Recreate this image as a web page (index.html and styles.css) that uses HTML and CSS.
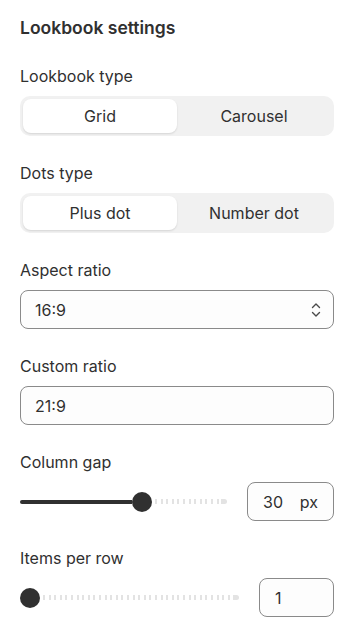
FILE: index.html
```html
<!DOCTYPE html>
<html lang="en">
<head>
  <meta charset="UTF-8">
  <title>Lookbook settings</title>
  <link rel="stylesheet" href="styles.css">
</head>
<body>

  <div class="settings">
    <h2 class="title">Lookbook settings</h2>

    <!-- lookbook type -->
    <div class="field">
      <label>Lookbook type</label>
      <div class="segmented">
        <button class="seg active">Grid</button>
        <button class="seg">Carousel</button>
      </div>
    </div>

    <!-- dots type -->
    <div class="field">
      <label>Dots type</label>
      <div class="segmented">
        <button class="seg active">Plus dot</button>
        <button class="seg">Number dot</button>
      </div>
    </div>

    <!-- aspect ratio -->
    <div class="field">
      <label>Aspect ratio</label>
      <div class="select">
        <span>16:9</span>
        <svg width="10" height="16" viewBox="0 0 10 16" fill="none" stroke="#4a4a4a" stroke-width="1.4" stroke-linecap="round" stroke-linejoin="round">
          <path d="M1.5 5.5 L5 2 L8.5 5.5"/>
          <path d="M1.5 10.5 L5 14 L8.5 10.5"/>
        </svg>
      </div>
    </div>

    <!-- custom ratio -->
    <div class="field">
      <label>Custom ratio</label>
      <div class="input">21:9</div>
    </div>

    <!-- column gap -->
    <div class="field">
      <label>Column gap</label>
      <div class="range-row">
        <div class="slider" style="--p: 0.6">
          <span class="fill"></span>
          <span class="thumb"></span>
          <span class="rest"></span>
        </div>
        <div class="num wide"><span>30</span><span>px</span></div>
      </div>
    </div>

    <!-- items per row -->
    <div class="field">
      <label>Items per row</label>
      <div class="range-row">
        <div class="slider" style="--p: 0">
          <span class="fill"></span>
          <span class="thumb"></span>
          <span class="rest"></span>
        </div>
        <div class="num"><span>1</span></div>
      </div>
    </div>
  </div>

</body>
</html>
```

FILE: styles.css
```css
* {
  margin: 0; padding: 0; box-sizing: border-box;
}

body {
  font-family: 'Inter', 'Noto Sans', sans-serif;
  background: #fff;
  color: #303030;
}

.settings {
  padding: 16px 17px 0 20px;
  display: flex;
  flex-direction: column;
}

.title {
  font-size: 17.5px;
  font-weight: 600;
  line-height: 24px;
  margin-bottom: 26px;
}

.field {
  display: flex;
  flex-direction: column;
  gap: 10px;
  margin-bottom: 27px;
}

.field label {
  font-size: 16px;
  line-height: 20px;
}

/* segmented buttons */
.segmented {
  display: flex;
  height: 40px;
  padding: 3px;
  background: #f1f1f1;
  border-radius: 10px;
}

.seg {
  flex: 1;
  border: none;
  background: transparent;
  font-family: inherit;
  font-size: 16px;
  color: #303030;
  border-radius: 8px;
}

.seg.active {
  background: #fff;
  box-shadow: 0 1px 2px rgba(0, 0, 0, 0.12);
}

/* text inputs */
.select, .input, .num {
  height: 39px;
  border: 1px solid #8a8a8a;
  border-radius: 8px;
  background: #fdfdfd;
  font-size: 16px;
  display: flex;
  align-items: center;
  padding: 0 14px;
}

.select {
  justify-content: space-between;
  padding-right: 12px;
}

/* sliders */
.range-row {
  display: flex;
  align-items: center;
  gap: 20px;
}

.slider {
  flex: 1;
  display: flex;
  align-items: center;
  height: 20px;
}

.fill {
  width: calc((100% - 20px) * var(--p));
  height: 4px;
  background: #303030;
  border-radius: 2px 0 0 2px;
}

.thumb {
  width: 20px;
  height: 20px;
  flex-shrink: 0;
  border-radius: 50%;
  background: #303030;
}

.rest {
  flex: 1;
  height: 5px;
  margin-left: 3px;
  background: repeating-linear-gradient(to right, #e3e3e3 0 2px, transparent 2px 5.6px);
  position: relative;
}

.rest::after {
  content: "";
  position: absolute;
  right: 0;
  top: 0;
  width: 6px;
  height: 5px;
  border-radius: 0 3px 3px 0;
  background: #e3e3e3;
}

.num {
  width: 75px;
  flex-shrink: 0;
  padding: 0 15px;
}

.num.wide {
  width: 87px;
  justify-content: space-between;
}
```
